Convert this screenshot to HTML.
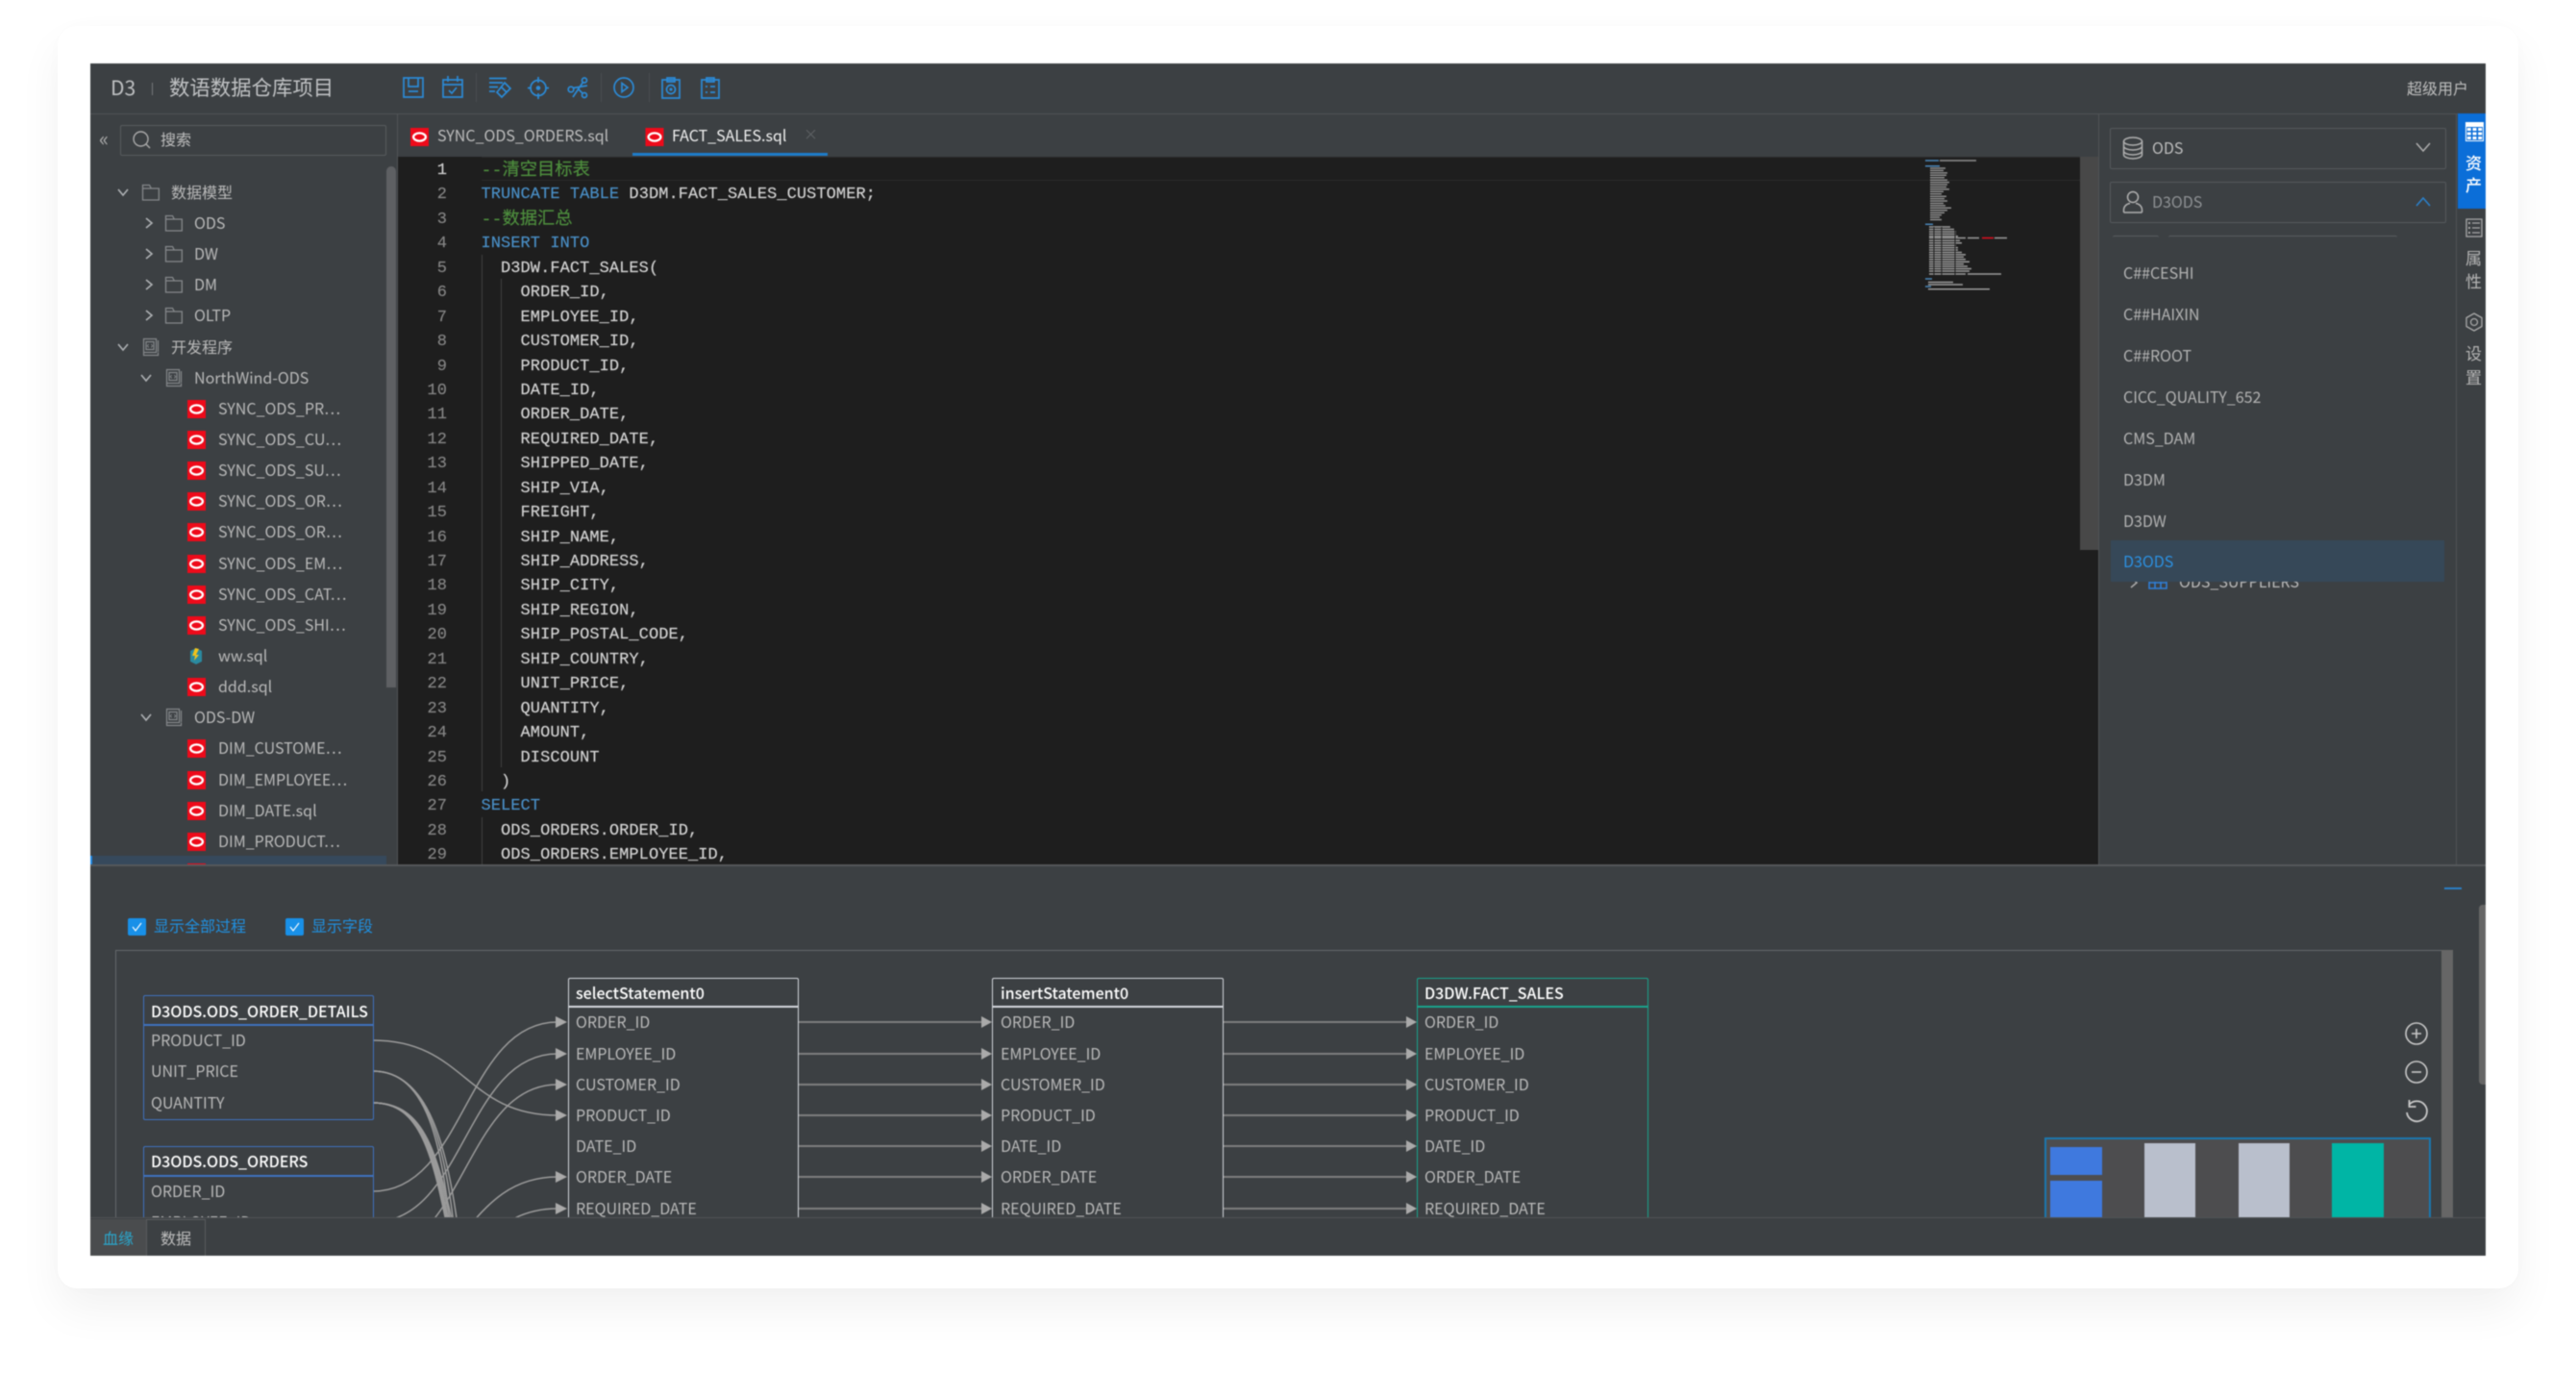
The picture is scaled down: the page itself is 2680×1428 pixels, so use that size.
<!DOCTYPE html>
<html><head><meta charset="utf-8"><title>D3</title>
<style>
html,body{margin:0;padding:0;background:#fff;width:2680px;height:1428px;overflow:hidden}
body{position:relative;font-family:"Noto Sans CJK SC","Liberation Sans",sans-serif;font-size:16px;color:#b9b9b9}
#card{position:absolute;left:60px;top:27px;width:2560px;height:1313px;background:#fff;border-radius:20px;box-shadow:0 22px 45px rgba(0,0,0,.055),0 0 30px rgba(0,0,0,.012)}
#app{position:absolute;left:94px;top:66px;width:2492px;height:1240px;background:#3c4043;overflow:hidden;filter:blur(.45px)}
#in{position:absolute;left:-94px;top:-66px;width:2680px;height:1428px}
.t{position:absolute;white-space:nowrap;line-height:28px;margin-top:-1px}
.b{position:absolute}
svg{position:absolute;overflow:visible}
.s{fill:none;stroke:#2b8ad6;stroke-width:1.7}
pre{position:absolute;margin:0;font-family:"Liberation Mono","Noto Sans CJK SC",monospace;font-size:17px;line-height:25.43px;color:#d4d4d4;letter-spacing:.06px;-webkit-text-stroke:.15px}
.k{color:#4a90c8}.c{color:#4e8f3e;font-size:18.3px;line-height:0;position:relative;top:1px;letter-spacing:0}
.h{color:#fff;font-weight:500}
.w{color:#b9b9b9}
</style></head>
<body>
<div id="card"></div>
<div id="app"><div id="in">
<svg width="0" height="0" style="position:absolute">
<defs>
<symbol id="o" viewBox="0 0 19 19"><rect width="19" height="19" fill="#ee0a1a"/><ellipse cx="9.5" cy="9.5" rx="6.4" ry="4.1" fill="none" stroke="#fff" stroke-width="2.3"/></symbol>
<symbol id="f" viewBox="0 0 20 20"><path d="M1.5 18V2.5h7l1.8 3.5h8v12zM1.5 6h8.8" fill="none" stroke="#85888b" stroke-width="1.3"/></symbol>
<symbol id="p" viewBox="0 0 20 20"><path d="M2.5 1.5h13v14h-13zM2.5 15.5v3h15v-3M17.5 3v12M5 4.5h8v8H5z" fill="none" stroke="#85888b" stroke-width="1.2"/><path d="M7.8 7l-1.6 1.7 1.6 1.7M10.2 7l1.6 1.7-1.6 1.7" fill="none" stroke="#85888b" stroke-width=".9"/></symbol>
<symbol id="d" viewBox="0 0 14 14"><path d="M2 4l5 6 5-6" fill="none" stroke="#aeb1b4" stroke-width="1.6"/></symbol>
<symbol id="r" viewBox="0 0 14 14"><path d="M4 2l6 5-6 5" fill="none" stroke="#aeb1b4" stroke-width="1.6"/></symbol>
</defs>
</svg>

<!-- header -->
<div class="b" style="left:94px;top:118px;width:2492px;height:1px;background:#505356"></div>
<div class="t" style="left:115px;top:78px;font-size:21px;color:#bfc1c3">D3</div>
<div class="b" style="left:158px;top:86px;width:1px;height:13px;background:#77797b"></div>
<div class="t" style="left:176px;top:78px;font-size:21.4px;color:#bfc1c3">数语数据仓库项目</div>
<div class="t" style="left:2504px;top:78px;font-size:16px;color:#bdbdbd">超级用户</div>

<!-- toolbar icons -->
<svg style="left:419px;top:80px" width="22" height="22" viewBox="0 0 22 22"><path class="s" d="M1 1h20v20H1zM6 1v9h10V1M6 15h10"/></svg>
<svg style="left:460px;top:79px" width="22" height="23" viewBox="0 0 22 23"><path class="s" d="M1 4h20v18H1zM1 9h20M6 0v6M16 0v6M7 15l3 3 5-6"/></svg>
<div class="b" style="left:495px;top:76px;width:1px;height:30px;background:#4a4d50"></div>
<svg style="left:508px;top:80px" width="24" height="22" viewBox="0 0 24 22"><path class="s" d="M1 1.5h18M1 6h14M1 10.5h9M1 15h6M17 6l6 6-9 9-5-5zM13 10l6 6"/></svg>
<svg style="left:549px;top:80px" width="22" height="23" viewBox="0 0 22 23"><circle class="s" cx="11" cy="11.5" r="8"/><circle cx="11" cy="11.5" r="2.3" fill="#2b8ad6"/><path class="s" d="M11 0v6M11 17v6M0 11.5h4M18 11.5h4"/></svg>
<svg style="left:590px;top:80px" width="22" height="22" viewBox="0 0 22 22"><circle class="s" cx="18" cy="3.5" r="2.5"/><circle class="s" cx="4" cy="13" r="2.8"/><circle class="s" cx="18" cy="19" r="2.5"/><path class="s" d="M16.5 5.5L6 21M6.5 11.5L21 9M11 12l5.5 5.5"/></svg>
<div class="b" style="left:625px;top:76px;width:1px;height:30px;background:#4a4d50"></div>
<svg style="left:638px;top:80px" width="22" height="22" viewBox="0 0 22 22"><circle class="s" cx="11" cy="11" r="10"/><path class="s" d="M9 6.5l6 4.5-6 4.5z"/></svg>
<div class="b" style="left:675px;top:76px;width:1px;height:30px;background:#4a4d50"></div>
<svg style="left:688px;top:80px" width="20" height="23" viewBox="0 0 20 23"><path class="s" d="M1 3h18v19H1zM6 3V1h8v2H6v2h8V3"/><circle class="s" cx="10" cy="13" r="4.5"/><circle cx="10" cy="13" r="1.6" fill="#2b8ad6"/></svg>
<svg style="left:729px;top:80px" width="20" height="23" viewBox="0 0 20 23"><path class="s" d="M1 3h18v19H1zM6 3V1h8v2H6v2h8V3M5 10h2M10 10h5M5 16h2M10 16h5"/></svg>

<!-- sidebar -->
<div class="b" style="left:413px;top:119px;width:1px;height:781px;background:#505356"></div>
<div class="t" style="left:103px;top:131px;font-size:21px;color:#aaa">«</div>
<div class="b" style="left:125px;top:130px;width:275px;height:30px;border:1px solid #585b5e;border-radius:2px"></div>
<svg style="left:137px;top:135px" width="22" height="22" viewBox="0 0 22 22"><circle cx="9.5" cy="9.5" r="7.5" fill="none" stroke="#aaa" stroke-width="1.4"/><path d="M15 15l4 4" fill="none" stroke="#aaa" stroke-width="1.4"/></svg>
<div class="t" style="left:167px;top:131px;color:#bdbdbd">搜索</div>

<div class="b" style="left:402px;top:173px;width:10px;height:542px;background:#5e6063;border-radius:5px 5px 0 0"></div>
<div class="b" style="left:94px;top:890px;width:308px;height:9px;background:#36495c"></div>
<div class="b" style="left:94px;top:890px;width:2px;height:9px;background:#1e88e5"></div>
<svg style="left:195px;top:898px" width="19" height="2"><rect width="19" height="2" fill="#ee0a1a"/></svg>

<svg style="left:121px;top:193px" width="14" height="14"><use href="#d"/></svg>
<svg style="left:147px;top:190px" width="20" height="20"><use href="#f"/></svg>
<div class="t" style="left:178px;top:186px">数据模型</div>
<svg style="left:148px;top:225px" width="14" height="14"><use href="#r"/></svg>
<svg style="left:171px;top:222px" width="20" height="20"><use href="#f"/></svg>
<div class="t" style="left:202px;top:218px">ODS</div>
<svg style="left:148px;top:257px" width="14" height="14"><use href="#r"/></svg>
<svg style="left:171px;top:254px" width="20" height="20"><use href="#f"/></svg>
<div class="t" style="left:202px;top:250px">DW</div>
<svg style="left:148px;top:289px" width="14" height="14"><use href="#r"/></svg>
<svg style="left:171px;top:286px" width="20" height="20"><use href="#f"/></svg>
<div class="t" style="left:202px;top:282px">DM</div>
<svg style="left:148px;top:321px" width="14" height="14"><use href="#r"/></svg>
<svg style="left:171px;top:318px" width="20" height="20"><use href="#f"/></svg>
<div class="t" style="left:202px;top:314px">OLTP</div>
<svg style="left:121px;top:354px" width="14" height="14"><use href="#d"/></svg>
<svg style="left:147px;top:351px" width="20" height="20"><use href="#p"/></svg>
<div class="t" style="left:178px;top:347px">开发程序</div>
<svg style="left:145px;top:386px" width="14" height="14"><use href="#d"/></svg>
<svg style="left:171px;top:383px" width="20" height="20"><use href="#p"/></svg>
<div class="t" style="left:202px;top:379px">NorthWind-ODS</div>

<svg style="left:195px;top:416px" width="19" height="19"><use href="#o"/></svg><div class="t" style="left:227px;top:411px">SYNC_ODS_PR⋯</div>
<svg style="left:195px;top:448px" width="19" height="19"><use href="#o"/></svg><div class="t" style="left:227px;top:443px">SYNC_ODS_CU⋯</div>
<svg style="left:195px;top:480px" width="19" height="19"><use href="#o"/></svg><div class="t" style="left:227px;top:475px">SYNC_ODS_SU⋯</div>
<svg style="left:195px;top:512px" width="19" height="19"><use href="#o"/></svg><div class="t" style="left:227px;top:507px">SYNC_ODS_OR⋯</div>
<svg style="left:195px;top:544px" width="19" height="19"><use href="#o"/></svg><div class="t" style="left:227px;top:539px">SYNC_ODS_OR⋯</div>
<svg style="left:195px;top:577px" width="19" height="19"><use href="#o"/></svg><div class="t" style="left:227px;top:572px">SYNC_ODS_EM⋯</div>
<svg style="left:195px;top:609px" width="19" height="19"><use href="#o"/></svg><div class="t" style="left:227px;top:604px">SYNC_ODS_CAT⋯</div>
<svg style="left:195px;top:641px" width="19" height="19"><use href="#o"/></svg><div class="t" style="left:227px;top:636px">SYNC_ODS_SHI⋯</div>
<svg style="left:195px;top:673px" width="19" height="19" viewBox="0 0 19 19"><path d="M9 1l6 3v11l-6 3-6-3V4z" fill="#2a8aa0"/><path d="M8 1l4 1-3 6 3 0-5 6 1-5H5z" fill="#f2c21a"/></svg><div class="t" style="left:227px;top:668px">ww.sql</div>
<svg style="left:195px;top:705px" width="19" height="19"><use href="#o"/></svg><div class="t" style="left:227px;top:700px">ddd.sql</div>
<svg style="left:145px;top:739px" width="14" height="14"><use href="#d"/></svg>
<svg style="left:171px;top:736px" width="20" height="20"><use href="#p"/></svg>
<div class="t" style="left:202px;top:732px">ODS-DW</div>
<svg style="left:195px;top:769px" width="19" height="19"><use href="#o"/></svg><div class="t" style="left:227px;top:764px">DIM_CUSTOME⋯</div>
<svg style="left:195px;top:802px" width="19" height="19"><use href="#o"/></svg><div class="t" style="left:227px;top:797px">DIM_EMPLOYEE⋯</div>
<svg style="left:195px;top:834px" width="19" height="19"><use href="#o"/></svg><div class="t" style="left:227px;top:829px">DIM_DATE.sql</div>
<svg style="left:195px;top:866px" width="19" height="19"><use href="#o"/></svg><div class="t" style="left:227px;top:861px">DIM_PRODUCT⋯</div>

<!-- tabs -->
<svg style="left:427px;top:133px" width="19" height="19"><use href="#o"/></svg>
<div class="t" style="left:455px;top:127px;color:#bdbdbd">SYNC_ODS_ORDERS.sql</div>
<svg style="left:671px;top:133px" width="20" height="19"><use href="#o"/></svg>
<div class="t" style="left:699px;top:127px;color:#f0f0f0">FACT_SALES.sql</div>
<div class="t" style="left:836px;top:127px;color:#5f6265;font-size:15px">×</div>
<div class="b" style="left:658px;top:159px;width:203px;height:3px;background:#1e7cca"></div>

<!-- editor -->
<div class="b" style="left:414px;top:163px;width:1769px;height:736px;background:#1e1e1e;overflow:hidden">
<div class="b" style="left:87px;top:0;width:1663px;height:25px;border-bottom:1px solid #2b2b2b;border-top:1px solid #2b2b2b;box-sizing:border-box"></div>
<div class="b" style="left:87px;top:102px;width:1px;height:558px;background:#404040"></div>
<div class="b" style="left:107px;top:127px;width:1px;height:508px;background:#404040"></div>
<div class="b" style="left:87px;top:687px;width:1px;height:60px;background:#404040"></div>
<pre style="left:1px;top:2px;width:50px;text-align:right;color:#858585"><span style="color:#d0d0d0">1</span>
2
3
4
5
6
7
8
9
10
11
12
13
14
15
16
17
18
19
20
21
22
23
24
25
26
27
28
29</pre>
<pre style="left:86.5px;top:2px"><span class="c">--清空目标表</span>
<span class="k">TRUNCATE TABLE</span> D3DM.FACT_SALES_CUSTOMER;
<span class="c">--数据汇总</span>
<span class="k">INSERT INTO</span>
  D3DW.FACT_SALES(
    ORDER_ID,
    EMPLOYEE_ID,
    CUSTOMER_ID,
    PRODUCT_ID,
    DATE_ID,
    ORDER_DATE,
    REQUIRED_DATE,
    SHIPPED_DATE,
    SHIP_VIA,
    FREIGHT,
    SHIP_NAME,
    SHIP_ADDRESS,
    SHIP_CITY,
    SHIP_REGION,
    SHIP_POSTAL_CODE,
    SHIP_COUNTRY,
    UNIT_PRICE,
    QUANTITY,
    AMOUNT,
    DISCOUNT
  )
<span class="k">SELECT</span>
  ODS_ORDERS.ORDER_ID,
  ODS_ORDERS.EMPLOYEE_ID,</pre>
<div class="b" style="left:1750px;top:0;width:19px;height:409px;background:#484848"></div>
</div>
<div class="b" style="left:2183px;top:119px;width:1px;height:781px;background:#505356"></div>

<!-- minimap -->
<svg style="left:0;top:0" width="2680" height="900" fill="none" stroke-width="1.5">
<path stroke="#4a86b8" d="M2003 167h14M2003 172.700h15M2003 233.300h8M2003 290h7M2003 298h6"/>
<path stroke="#8e8e8e" d="M2018 167h38M2008 175h16M2008 177.400h14M2008 179.900h18M2008 182.300h17M2008 184.700h15M2008 187.200h18M2008 189.600h20M2008 192h18M2008 194.500h17M2008 196.900h20M2008 199.300h14M2008 201.800h12M2008 204.200h17M2008 206.600h15M2008 209h18M2008 211.500h14M2008 213.900h16M2008 216.300h22M2008 218.800h18M2008 221.200h15M2008 223.600h12M2008 226h10M2008 228.500h12"/>
<path stroke="#9a9a9a" d="M2007 236h22M2007 238.500h26M2007 241h28M2007 243.400h28M2007 245.800h30M2007 247.500h38M2047 247.500h12M2075 247.500h13M2007 250.300h32M2007 252.700h34M2007 255.200h28M2007 257.600h30M2007 260h30M2007 262.500h34M2007 264.900h38M2007 267.300h36M2007 269.800h38M2007 272.200h42M2007 274.600h36M2007 277h40M2007 279.500h44M2007 282h42M2007 285h38M2047 285h35M2006 293.500h26M2006 296h36M2006 300.700h64"/>
<path stroke="#e00f1f" d="M2062 247.500h12"/>
<path stroke="#1e1e1e" stroke-width="1" d="M2012 236v50M2020 236v50M2034 236v50"/>
</svg>

<!-- right panel -->
<div class="b" style="left:2195px;top:133px;width:348px;height:41px;border:1px solid #56595c;border-radius:2px"></div>
<svg style="left:2208px;top:142px" width="22" height="24" viewBox="0 0 22 24"><ellipse cx="11" cy="5" rx="9.500" ry="4" fill="none" stroke="#b0b0b0" stroke-width="1.5"/><path d="M1.500 5v14c0 2.200 4.200 4 9.500 4s9.500-1.800 9.500-4V5M1.500 10c0 2.200 4.200 4 9.500 4s9.500-1.800 9.500-4M1.500 15c0 2.200 4.200 4 9.500 4s9.500-1.800 9.500-4" fill="none" stroke="#b0b0b0" stroke-width="1.500"/></svg>
<div class="t" style="left:2239px;top:140px;color:#bdbdbd">ODS</div>
<svg style="left:2513px;top:146px" width="16" height="14" viewBox="0 0 16 14"><path d="M1 3l7 8 7-8" fill="none" stroke="#aeaeae" stroke-width="1.500"/></svg>
<div class="b" style="left:2195px;top:189px;width:348px;height:41px;border:1px solid #56595c;border-radius:2px"></div>
<svg style="left:2208px;top:198px" width="22" height="24" viewBox="0 0 22 24"><circle cx="11" cy="7" r="5.500" fill="none" stroke="#b0b0b0" stroke-width="1.500"/><path d="M1.500 23v-2.500c0-4 3-6.500 6.500-7M20.500 23v-2.500c0-4-3-6.500-6.500-7M1.500 23h19" fill="none" stroke="#b0b0b0" stroke-width="1.500"/></svg>
<div class="t" style="left:2239px;top:196px;color:#8e9194">D3ODS</div>
<svg style="left:2513px;top:203px" width="16" height="14" viewBox="0 0 16 14"><path d="M1 11l7-8 7 8" fill="none" stroke="#2b7fc8" stroke-width="1.600"/></svg>
<div class="b" style="left:2198px;top:245px;width:48px;height:3px;border-top:1px solid #5a5d60;border-radius:2px"></div>
<div class="b" style="left:2256px;top:245px;width:238px;height:3px;border-top:1px solid #5a5d60;border-radius:2px"></div>
<div class="t" style="left:2209px;top:270px;color:#b3b3b3">C##CESHI</div>
<div class="t" style="left:2209px;top:313px;color:#b3b3b3">C##HAIXIN</div>
<div class="t" style="left:2209px;top:356px;color:#b3b3b3">C##ROOT</div>
<div class="t" style="left:2209px;top:399px;color:#b3b3b3">CICC_QUALITY_652</div>
<div class="t" style="left:2209px;top:442px;color:#b3b3b3">CMS_DAM</div>
<div class="t" style="left:2209px;top:485px;color:#b3b3b3">D3DM</div>
<div class="t" style="left:2209px;top:528px;color:#b3b3b3">D3DW</div>
<svg style="left:2216px;top:600px" width="10" height="12" viewBox="0 0 10 12"><path d="M1 1l6 5-6 5" fill="none" stroke="#aaa" stroke-width="1.500"/></svg>
<svg style="left:2235px;top:601px" width="20" height="12" viewBox="0 0 20 12"><path d="M1 1h18v10H1zM1 5h18M7 1v10M13 1v10" fill="none" stroke="#2f7fd8" stroke-width="1.600"/></svg>
<div class="t" style="left:2267px;top:591px;color:#b9b9b9">ODS_SUPPLIERS</div>
<div class="b" style="left:2196px;top:562px;width:347px;height:43px;background:#364858"></div>
<div class="t" style="left:2209px;top:570px;color:#2c90e0">D3ODS</div>

<!-- right rail -->
<div class="b" style="left:2555px;top:119px;width:1px;height:781px;background:#505356"></div>
<div class="b" style="left:2557px;top:118px;width:29px;height:99px;background:#0b6ed8"></div>
<svg style="left:2565px;top:127px" width="19" height="20" viewBox="0 0 19 20"><rect width="19" height="20" fill="#fff"/><path d="M1 5h17v14H1z" fill="#0b6ed8"/><path d="M1.800 6h4v3h-4zM7.500 6h4v3h-4zM13.200 6h4v3h-4zM1.800 10.500h4v3h-4zM7.500 10.500h4v3h-4zM13.200 10.500h4v3h-4zM1.800 15h4v3h-4zM7.500 15h4v3h-4zM13.200 15h4v3h-4z" fill="#fff"/></svg>
<div class="t" style="left:2565px;top:156px;font-size:17px;color:#fff;font-weight:500">资</div>
<div class="t" style="left:2565px;top:179px;font-size:17px;color:#fff;font-weight:500">产</div>
<svg style="left:2565px;top:227px" width="18" height="20" viewBox="0 0 18 20"><path d="M1 1h16v18H1zM7 5h8M7 10h8M7 15h8" fill="none" stroke="#a8a8a8" stroke-width="1.300"/><path d="M3 4h2v2H3zM3 9h2v2H3zM3 14h2v2H3z" fill="#a8a8a8"/></svg>
<div class="t" style="left:2565px;top:255px;font-size:17px;color:#b5b5b5">属</div>
<div class="t" style="left:2565px;top:279px;font-size:17px;color:#b5b5b5">性</div>
<svg style="left:2564px;top:325px" width="20" height="20" viewBox="0 0 20 20"><path d="M10 1l8 4.500v9L10 19l-8-4.500v-9z" fill="none" stroke="#a8a8a8" stroke-width="1.300" stroke-linejoin="round"/><circle cx="10" cy="10" r="3.500" fill="none" stroke="#a8a8a8" stroke-width="1.300"/></svg>
<div class="t" style="left:2565px;top:354px;font-size:17px;color:#b5b5b5">设</div>
<div class="t" style="left:2565px;top:379px;font-size:17px;color:#b5b5b5">置</div>

<!-- bottom -->
<div class="b" style="left:94px;top:899px;width:2492px;height:2px;background:#55585b"></div>
<div class="b" style="left:2543px;top:923px;width:18px;height:2px;background:#2b7fc8"></div>
<div class="b" style="left:2579px;top:941px;width:7px;height:187px;background:#666;border-radius:4px 0 0 4px"></div>

<div class="b" style="left:133px;top:955px;width:19px;height:18px;background:#1890e8;border-radius:2px"></div>
<svg style="left:133px;top:955px" width="19" height="18" viewBox="0 0 19 18"><path d="M5 9l3 4 6-8" fill="none" stroke="#fff" stroke-width="1.100"/></svg>
<div class="t" style="left:160px;top:949px;color:#2090e0">显示全部过程</div>
<div class="b" style="left:297px;top:955px;width:19px;height:18px;background:#1890e8;border-radius:2px"></div>
<svg style="left:297px;top:955px" width="19" height="18" viewBox="0 0 19 18"><path d="M5 9l3 4 6-8" fill="none" stroke="#fff" stroke-width="1.100"/></svg>
<div class="t" style="left:324px;top:949px;color:#2090e0">显示字段</div>

<!-- diagram, clipped at 1266 -->
<div class="b" style="left:0;top:980px;width:2680px;height:287px;overflow:hidden"><div class="b" style="left:0;top:-980px;width:2680px;height:1428px">
<div class="b" style="left:120px;top:988px;width:2420px;height:1px;background:#66696c"></div>
<div class="b" style="left:120px;top:988px;width:1px;height:300px;background:#66696c"></div>
<div class="b" style="left:2540px;top:988px;width:12px;height:300px;background:#666"></div>

<svg style="left:0;top:0" width="2680" height="1428" fill="none" stroke="#9a9a9a" stroke-width="1.500">
<path d="M388 1082C484 1082 484 1160 580 1160"/>
<path d="M388 1239C484 1239 484 1063 580 1063"/>
<path d="M388 1271C484 1271 484 1096 580 1096"/>
<path d="M388 1303C484 1303 484 1128 580 1128"/>
<path d="M388 1336C484 1336 484 1224 580 1224"/>
<path d="M388 1368C484 1368 484 1257 580 1257"/>
<path d="M388 1114C445 1114 460 1190 470 1290"/>
<path d="M388 1114C445 1114 463 1190 474 1290"/>
<path d="M388 1114C445 1114 466 1190 478 1290"/>
<path d="M388 1147C438 1147 450 1200 468 1290"/>
<path d="M388 1147C439 1147 451 1200 469 1290"/>
<path d="M388 1147C440 1147 452 1200 470 1290"/>
<path d="M388 1147C441 1147 453 1200 471 1290"/>
<path d="M388 1147C442 1147 454 1200 473 1290"/>
<path d="M388 1147C443 1147 455 1200 475 1290"/>
<path stroke="#7e7e7e" stroke-width="2" d="M830 1063H1022M830 1096H1022M830 1128H1022M830 1160H1022M830 1192H1022M830 1224H1022M830 1257H1022M1272 1063H1464M1272 1096H1464M1272 1128H1464M1272 1160H1464M1272 1192H1464M1272 1224H1464M1272 1257H1464"/>
<path fill="#aaa" stroke="none" d="M578 1057l12 6-12 6zM578 1090l12 6-12 6zM578 1122l12 6-12 6zM578 1154l12 6-12 6zM578 1218l12 6-12 6zM578 1251l12 6-12 6zM1021 1057l11 6-11 6zM1021 1090l11 6-11 6zM1021 1122l11 6-11 6zM1021 1154l11 6-11 6zM1021 1186l11 6-11 6zM1021 1218l11 6-11 6zM1021 1251l11 6-11 6zM1463 1057l11 6-11 6zM1463 1090l11 6-11 6zM1463 1122l11 6-11 6zM1463 1154l11 6-11 6zM1463 1186l11 6-11 6zM1463 1218l11 6-11 6zM1463 1251l11 6-11 6z"/>
</svg>

<!-- table A -->
<div class="b" style="left:149px;top:1035px;width:238px;height:128px;border:1.500px solid #3f72c0;border-radius:2px"></div>
<div class="b" style="left:149px;top:1065px;width:239px;height:2px;background:#3f72c0"></div>
<div class="t h" style="left:157px;top:1038px">D3ODS.ODS_ORDER_DETAILS</div>
<div class="t" style="left:157px;top:1068px">PRODUCT_ID</div>
<div class="t" style="left:157px;top:1100px">UNIT_PRICE</div>
<div class="t" style="left:157px;top:1133px">QUANTITY</div>
<!-- table B -->
<div class="b" style="left:149px;top:1192px;width:238px;height:140px;border:1.500px solid #3f72c0;border-radius:2px"></div>
<div class="b" style="left:149px;top:1222px;width:239px;height:2px;background:#3f72c0"></div>
<div class="t h" style="left:157px;top:1194px">D3ODS.ODS_ORDERS</div>
<div class="t" style="left:157px;top:1225px">ORDER_ID</div>
<div class="t" style="left:157px;top:1257px">EMPLOYEE_ID</div>
<!-- table C -->
<div class="b" style="left:591px;top:1017px;width:238px;height:300px;border:1.500px solid #d5d8de;border-radius:2px"></div>
<div class="b" style="left:591px;top:1046px;width:239px;height:2px;background:#d5d8de"></div>
<div class="t h" style="left:599px;top:1019px">selectStatement0</div>
<div class="t" style="left:599px;top:1049px">ORDER_ID</div>
<div class="t" style="left:599px;top:1082px">EMPLOYEE_ID</div>
<div class="t" style="left:599px;top:1114px">CUSTOMER_ID</div>
<div class="t" style="left:599px;top:1146px">PRODUCT_ID</div>
<div class="t" style="left:599px;top:1178px">DATE_ID</div>
<div class="t" style="left:599px;top:1210px">ORDER_DATE</div>
<div class="t" style="left:599px;top:1243px">REQUIRED_DATE</div>
<!-- table D -->
<div class="b" style="left:1032px;top:1017px;width:239px;height:300px;border:1.500px solid #d5d8de;border-radius:2px"></div>
<div class="b" style="left:1032px;top:1046px;width:240px;height:2px;background:#d5d8de"></div>
<div class="t h" style="left:1041px;top:1019px">insertStatement0</div>
<div class="t" style="left:1041px;top:1049px">ORDER_ID</div>
<div class="t" style="left:1041px;top:1082px">EMPLOYEE_ID</div>
<div class="t" style="left:1041px;top:1114px">CUSTOMER_ID</div>
<div class="t" style="left:1041px;top:1146px">PRODUCT_ID</div>
<div class="t" style="left:1041px;top:1178px">DATE_ID</div>
<div class="t" style="left:1041px;top:1210px">ORDER_DATE</div>
<div class="t" style="left:1041px;top:1243px">REQUIRED_DATE</div>
<!-- table E -->
<div class="b" style="left:1474px;top:1017px;width:239px;height:300px;border:1.500px solid #18a68e;border-radius:2px"></div>
<div class="b" style="left:1474px;top:1046px;width:240px;height:2px;background:#18a68e"></div>
<div class="t h" style="left:1482px;top:1019px">D3DW.FACT_SALES</div>
<div class="t" style="left:1482px;top:1049px">ORDER_ID</div>
<div class="t" style="left:1482px;top:1082px">EMPLOYEE_ID</div>
<div class="t" style="left:1482px;top:1114px">CUSTOMER_ID</div>
<div class="t" style="left:1482px;top:1146px">PRODUCT_ID</div>
<div class="t" style="left:1482px;top:1178px">DATE_ID</div>
<div class="t" style="left:1482px;top:1210px">ORDER_DATE</div>
<div class="t" style="left:1482px;top:1243px">REQUIRED_DATE</div>

<!-- zoom controls -->
<svg style="left:2502px;top:1063px" width="24" height="24" viewBox="0 0 24 24"><circle cx="12" cy="12" r="11" fill="none" stroke="#c8c8c8" stroke-width="1.600"/><path d="M7 12h10M12 7v10" stroke="#c8c8c8" stroke-width="1.600"/></svg>
<svg style="left:2502px;top:1103px" width="24" height="24" viewBox="0 0 24 24"><circle cx="12" cy="12" r="11" fill="none" stroke="#c8c8c8" stroke-width="1.600"/><path d="M7 12h10" stroke="#c8c8c8" stroke-width="1.600"/></svg>
<svg style="left:2502px;top:1144px" width="24" height="24" viewBox="0 0 24 24"><path d="M4 5.500A10.500 10.500 0 1 1 2 13" fill="none" stroke="#c8c8c8" stroke-width="1.800"/><path d="M4.500 0v7h7" fill="none" stroke="#c8c8c8" stroke-width="1.800"/></svg>

<!-- overview -->
<div class="b" style="left:2127px;top:1183px;width:398px;height:100px;background:#4d4d4f;border:2px solid #1a78b0"></div>
<div class="b" style="left:2133px;top:1193px;width:54px;height:29px;background:#3f79de"></div>
<div class="b" style="left:2133px;top:1228px;width:54px;height:50px;background:#3f79de"></div>
<div class="b" style="left:2231px;top:1189px;width:53px;height:90px;background:#b9bfcc"></div>
<div class="b" style="left:2329px;top:1189px;width:53px;height:90px;background:#b9bfcc"></div>
<div class="b" style="left:2426px;top:1189px;width:54px;height:90px;background:#00b5a5"></div>
</div></div>

<!-- bottom tabs -->
<div class="b" style="left:94px;top:1266px;width:2492px;height:1px;background:#505356"></div>
<div class="b" style="left:94px;top:1268px;width:58px;height:38px;background:#4a4c4e"></div>
<div class="b" style="left:152px;top:1268px;width:60px;height:38px;border-left:1px solid #5a5c5e;border-right:1px solid #5a5c5e;border-top:1px solid #5a5c5e"></div>
<div class="t" style="left:107px;top:1274px;color:#2aa6cc">血缘</div>
<div class="t" style="left:167px;top:1274px;color:#bdbdbd">数据</div>
</div></div>
</body></html>
